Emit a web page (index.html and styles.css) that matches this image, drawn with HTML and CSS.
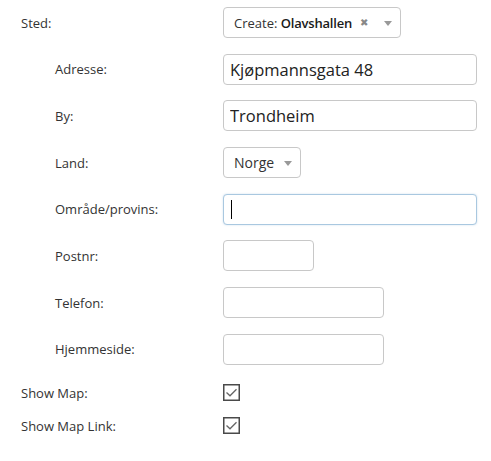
FILE: index.html
```html
<!DOCTYPE html>
<html lang="no">
<head>
<meta charset="utf-8">
<title>Sted</title>
<link rel="stylesheet" href="styles.css">
</head>
<body>
<form class="form">
  <div class="row">
    <label class="label">Sted:</label>
    <div class="field">
      <div class="select select-wide">
        <span class="select-text">Create: <b>Olavshallen</b></span>
        <span class="clear">&#x2716;</span>
        <span class="arrow"></span>
      </div>
    </div>
  </div>
  <div class="row">
    <label class="label sub">Adresse:</label>
    <div class="field"><input class="input wide" type="text" value="Kjøpmannsgata 48"></div>
  </div>
  <div class="row">
    <label class="label sub">By:</label>
    <div class="field"><input class="input wide" type="text" value="Trondheim"></div>
  </div>
  <div class="row">
    <label class="label sub">Land:</label>
    <div class="field">
      <div class="select select-small">
        <span class="select-text">Norge</span>
        <span class="arrow"></span>
      </div>
    </div>
  </div>
  <div class="row">
    <label class="label sub">Område/provins:</label>
    <div class="field focus-wrap">
      <input class="input wide focused" type="text" value="">
      <span class="caret"></span>
    </div>
  </div>
  <div class="row">
    <label class="label sub">Postnr:</label>
    <div class="field"><input class="input short" type="text" value=""></div>
  </div>
  <div class="row">
    <label class="label sub">Telefon:</label>
    <div class="field"><input class="input medium" type="text" value=""></div>
  </div>
  <div class="row">
    <label class="label sub">Hjemmeside:</label>
    <div class="field"><input class="input medium" type="text" value=""></div>
  </div>
  <div class="check-rows">
    <div class="crow">
      <label class="label">Show Map:</label>
      <div class="field">
        <span class="checkbox"><svg viewBox="0 0 17 17" width="17" height="17"><rect x="0.75" y="0.75" width="15.5" height="15.5" fill="#fff" stroke="#4a4a4a" stroke-width="1.5"/><path d="M3.5 8.5 L7 11.8 L13.5 5.2" fill="none" stroke="#666" stroke-width="1.3"/></svg></span>
      </div>
    </div>
    <div class="crow">
      <label class="label">Show Map Link:</label>
      <div class="field">
        <span class="checkbox"><svg viewBox="0 0 17 17" width="17" height="17"><rect x="0.75" y="0.75" width="15.5" height="15.5" fill="#fff" stroke="#4a4a4a" stroke-width="1.5"/><path d="M3.5 8.5 L7 11.8 L13.5 5.2" fill="none" stroke="#666" stroke-width="1.3"/></svg></span>
      </div>
    </div>
  </div>
</form>
</body>
</html>
```
FILE: styles.css
```css
html, body {
  margin: 0;
  padding: 0;
  background: #fff;
}
body {
  font-family: "Open Sans", "Noto Sans", "DejaVu Sans", sans-serif;
  color: #333;
}
.form {
  padding: 7px 0 0 21px;
  display: flex;
  flex-direction: column;
  gap: 15.7px;
}
.row {
  display: grid;
  grid-template-columns: 202px 1fr;
  align-items: center;
  height: 31px;
}
.label {
  font-size: 13px;
  color: #333;
}
.label.sub {
  padding-left: 34px;
}
.field {
  display: flex;
  align-items: center;
}
.input {
  box-sizing: border-box;
  height: 31px;
  border: 1px solid #c8c8c8;
  border-radius: 4px;
  padding: 0 6px;
  font-family: "Open Sans", "Noto Sans", sans-serif;
  font-size: 16.5px;
  color: #222;
  background: #fff;
  outline: none;
}
.input.wide { width: 254px; }
.input.short { width: 91px; }
.input.medium { width: 161px; }
.input.focused {
  border-color: #a9c8e0;
  box-shadow: 0 0 2px rgba(102, 155, 200, 0.35);
}
.focus-wrap {
  position: relative;
}
.caret {
  position: absolute;
  left: 8px;
  top: 6px;
  width: 1px;
  height: 19px;
  background: #000;
}
.select {
  box-sizing: border-box;
  height: 31px;
  border: 1px solid #c8c8c8;
  border-radius: 4px;
  display: flex;
  align-items: center;
  padding-left: 10px;
  position: relative;
  background: #fff;
}
.select-wide { width: 178px; }
.select-small { width: 78px; }
.select-text {
  font-size: 13px;
  color: #333;
}
.select-small .select-text {
  font-size: 14px;
}
.select-text b {
  font-weight: 600;
  color: #1a1a1a;
  letter-spacing: -0.2px;
}
.clear {
  position: absolute;
  left: 136px;
  top: 7px;
  font-size: 10px;
  color: #888;
}
.arrow {
  position: absolute;
  right: 8px;
  top: 13px;
  width: 0;
  height: 0;
  border-left: 4px solid transparent;
  border-right: 4px solid transparent;
  border-top: 5px solid #999;
}
.check-rows {
  display: flex;
  flex-direction: column;
  margin-top: -4.5px;
}
.crow {
  display: grid;
  grid-template-columns: 202px 1fr;
  align-items: center;
  height: 33px;
}
.checkbox {
  display: block;
  width: 17px;
  height: 17px;
}
.checkbox svg {
  display: block;
}
```
